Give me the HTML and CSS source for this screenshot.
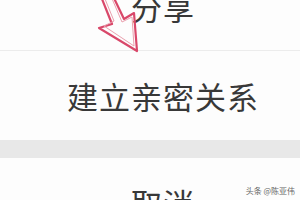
FILE: index.html
```html
<!DOCTYPE html>
<html lang="zh">
<head>
<meta charset="utf-8">
<link rel="stylesheet" href="styles.css">
</head>
<body>
<div class="screen">
  <div class="sheet">
    <div class="row row-first">分享</div>
    <div class="row">建立亲密关系</div>
    <div class="gap"></div>
    <div class="row">取消</div>
  </div>
  <svg class="arrow" width="60" height="60" viewBox="0 0 60 60">
    <polygon points="5,-6 17,24 4,28 42,51 39,13 29,19 17,-6" fill="none" stroke="#d9486a" stroke-width="2.2" stroke-linejoin="round"/>
    <polygon points="8,-6 19,21 9,26 39,46 37,17 27,22 15,-6" fill="none" stroke="#eaa0ae" stroke-width="1" stroke-linejoin="round"/>
  </svg>
  <div class="watermark">头条 @陈亚伟</div>
</div>
</body>
</html>
```

FILE: styles.css
```css
html, body {
  margin: 0;
  padding: 0;
  background: #fdfdfd;
}
.screen {
  position: relative;
  width: 300px;
  height: 200px;
  overflow: hidden;
}
.sheet {
  width: 326px;
  margin-top: -37px;
  display: flex;
  flex-direction: column;
}
.row {
  height: 89px;
  display: flex;
  align-items: center;
  justify-content: center;
  font-family: "Noto Sans CJK SC", sans-serif;
  font-size: 31px;
  letter-spacing: 1px;
  color: #383838;
  background: #fdfdfd;
}
.row-first {
  height: 87px;
  border-bottom: 1px solid #ececec;
}
.gap {
  height: 18px;
  background: #e8e8e8;
}
.arrow {
  position: absolute;
  left: 95px;
  top: 0;
}
.watermark {
  position: absolute;
  right: 5px;
  bottom: 4px;
  font-family: "Noto Sans CJK SC", sans-serif;
  font-size: 8px;
  color: #666;
}
```
